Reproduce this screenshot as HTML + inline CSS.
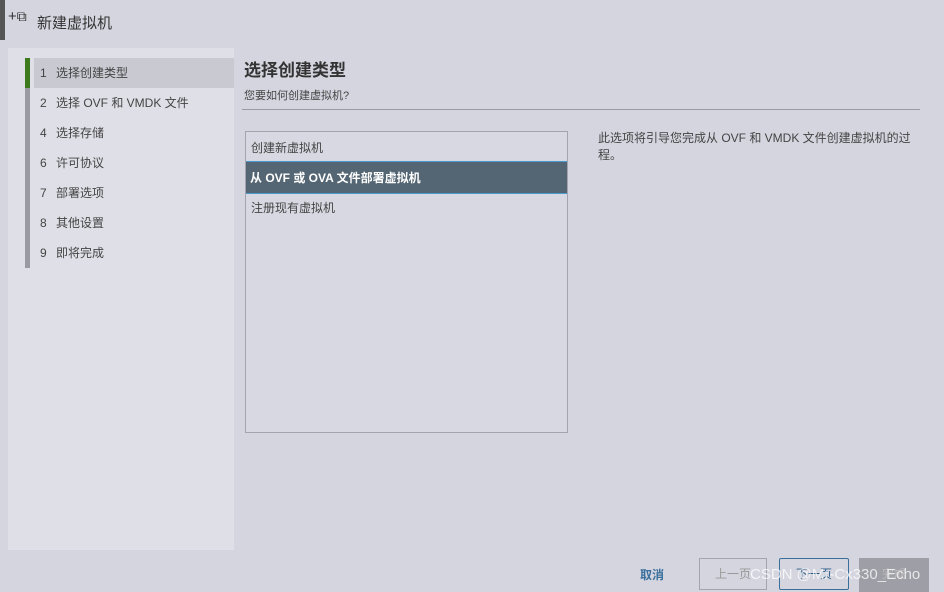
<!DOCTYPE html><html><head><meta charset="utf-8"><style>
body{margin:0;width:944px;height:592px;background:#d5d5df;font-family:"Liberation Sans","Noto Sans CJK SC",sans-serif;position:relative;overflow:hidden;color:#333}
.a{position:absolute}
.nav{left:8px;top:48px;width:226px;height:502px;background:#dfdfe7}
.item{position:absolute;left:34px;width:200px;height:30px;line-height:30px;font-size:12px;color:#444}
.item span{display:inline-block;width:16px;margin-left:6px}
</style></head><body>
<div class="a" style="left:0;top:0;width:5px;height:40px;background:#555"></div>
<div class="a" style="left:8px;top:8px;font-size:15px;color:#333">+<span style="font-size:14px">⧉</span></div>
<div class="a" style="left:37px;top:12px;font-size:15px;color:#333">新建虚拟机</div>
<div class="a nav"></div>
<div class="a" style="left:25px;top:58px;width:5px;height:210px;background:#9a9aa2"></div>
<div class="a" style="left:25px;top:58px;width:5px;height:30px;background:#3d7a1e"></div>
<div class="item" style="top:58px;background:#c9c9d2"><span>1</span>选择创建类型</div>
<div class="item" style="top:88px"><span>2</span>选择 OVF 和 VMDK 文件</div>
<div class="item" style="top:118px"><span>4</span>选择存储</div>
<div class="item" style="top:148px"><span>6</span>许可协议</div>
<div class="item" style="top:178px"><span>7</span>部署选项</div>
<div class="item" style="top:208px"><span>8</span>其他设置</div>
<div class="item" style="top:238px"><span>9</span>即将完成</div>
<div class="a" style="left:244px;top:56px;font-size:17px;font-weight:bold;color:#333">选择创建类型</div>
<div class="a" style="left:244px;top:87px;font-size:11px;color:#444">您要如何创建虚拟机?</div>
<div class="a" style="left:242px;top:109px;width:678px;height:1px;background:#9a9aa4"></div>
<div class="a" style="left:245px;top:131px;width:321px;height:300px;border:1px solid #a4a4ae;background:#d8d8e2"></div>
<div class="a" style="left:251px;top:139px;font-size:12px;color:#444">创建新虚拟机</div>
<div class="a" style="left:246px;top:161px;width:321px;height:31px;background:#546673;border-top:1px solid #4a9ad0;border-bottom:1px solid #4a9ad0"></div>
<div class="a" style="left:250px;top:169px;font-size:12px;font-weight:bold;color:#fff">从 OVF 或 OVA 文件部署虚拟机</div>
<div class="a" style="left:251px;top:199px;font-size:12px;color:#444">注册现有虚拟机</div>
<div class="a" style="left:598px;top:130px;width:330px;font-size:12px;line-height:17px;color:#444">此选项将引导您完成从 OVF 和 VMDK 文件创建虚拟机的过程。</div>
<div class="a" style="left:640px;top:566px;font-size:12px;font-weight:bold;color:#3a6f9c">取消</div>
<div class="a" style="left:699px;top:558px;width:68px;height:32px;border:1px solid #a4a4ae;box-sizing:border-box;font-size:12px;color:#999;text-align:center;line-height:30px">上一页</div>
<div class="a" style="left:779px;top:558px;width:70px;height:32px;border:1px solid #3a6f9c;border-radius:2px;box-sizing:border-box;font-size:12px;color:#2a5a84;text-align:center;line-height:30px">下一页</div>
<div class="a" style="left:859px;top:558px;width:70px;height:34px;background:#9e9ea6;font-size:12px;color:#bbb;text-align:center;line-height:32px">完成</div>
<div class="a" style="left:750px;top:566px;font-size:15px;color:rgba(255,255,255,0.75)">CSDN @Mr-Cx330_Echo</div>
</body></html>
